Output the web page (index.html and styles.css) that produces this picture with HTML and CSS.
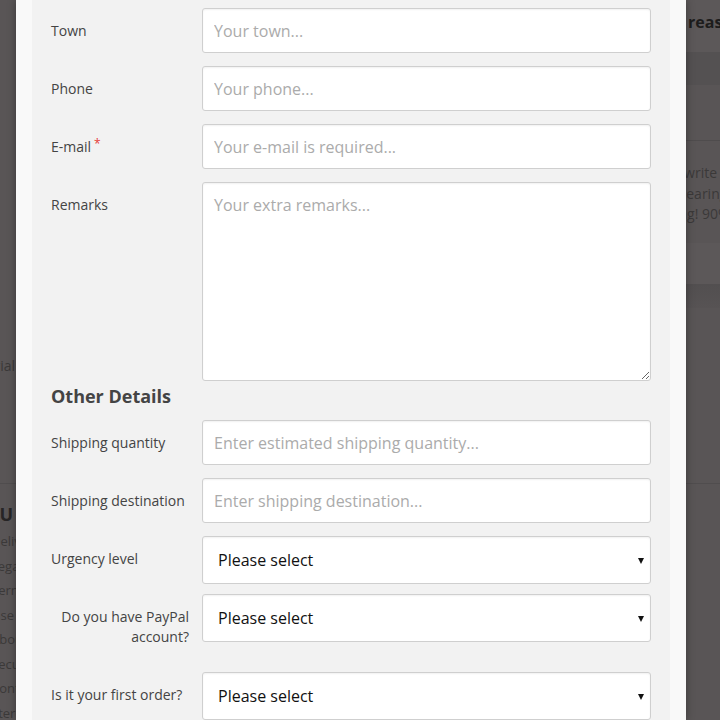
FILE: index.html
```html
<!DOCTYPE html>
<html lang="en">
<head>
  <meta charset="UTF-8">
  <meta name="viewport" content="width=device-width, initial-scale=1.0">
  <title>Order Form</title>
  <link rel="stylesheet" href="styles.css">
</head>
<body>
  <!-- Page behind the dialog -->
  <div class="page">
    <div class="page-top">
      <aside class="side-left">
        <p class="side-tag">Tutorial</p>
      </aside>
      <div class="page-main"></div>
      <aside class="side-right">
        <div class="side-head">reasons to order</div>
        <div class="side-band"></div>
        <div class="side-box"></div>
        <p class="side-text">
          <span>o write down</span>
          <span>clearing up</span>
          <span>ing! 90% off</span>
        </p>
        <div class="side-card"></div>
        <div class="side-shade"></div>
      </aside>
    </div>
    <div class="page-bottom">
      <div class="side-left">
        <h4 class="menu-title">MENU</h4>
        <ul class="menu-list">
          <li>Delivery</li>
          <li>Legal</li>
          <li>Terms</li>
          <li>Use</li>
          <li>About</li>
          <li>Security</li>
          <li>Contact</li>
          <li>Stern</li>
        </ul>
      </div>
    </div>
  </div>

  <!-- Order dialog -->
  <div class="modal">
    <div class="modal-body">
      <form class="order-form">
        <div class="row">
          <label for="town">Town</label>
          <input type="text" id="town" placeholder="Your town...">
        </div>
        <div class="row">
          <label for="phone">Phone</label>
          <input type="text" id="phone" placeholder="Your phone...">
        </div>
        <div class="row">
          <label for="email">E-mail<span class="req">*</span></label>
          <input type="email" id="email" placeholder="Your e-mail is required..." required>
        </div>
        <div class="row row-area">
          <label for="remarks">Remarks</label>
          <textarea id="remarks" placeholder="Your extra remarks..."></textarea>
        </div>

        <h3 class="form-title">Other Details</h3>

        <div class="row">
          <label for="qty">Shipping quantity</label>
          <input type="text" id="qty" placeholder="Enter estimated shipping quantity...">
        </div>
        <div class="row">
          <label for="dest">Shipping destination</label>
          <input type="text" id="dest" placeholder="Enter shipping destination...">
        </div>
        <div class="row row-select">
          <label for="urgency">Urgency level</label>
          <div class="select-wrap">
            <select id="urgency">
              <option>Please select</option>
              <option>Low</option>
              <option>High</option>
            </select>
          </div>
        </div>
        <div class="row row-select">
          <label for="paypal" class="label-right">Do you have PayPal account?</label>
          <div class="select-wrap">
            <select id="paypal">
              <option>Please select</option>
              <option>Yes</option>
              <option>No</option>
            </select>
          </div>
        </div>
        <div class="row row-select">
          <label for="first">Is it your first order?</label>
          <div class="select-wrap">
            <select id="first">
              <option>Please select</option>
              <option>Yes</option>
              <option>No</option>
            </select>
          </div>
        </div>
      </form>
    </div>
  </div>
</body>
</html>
```

FILE: styles.css
```css
html, body {
  margin: 0;
  padding: 0;
  height: 100%;
  overflow: hidden;
}
body {
  font-family: "Open Sans", Arial, sans-serif;
  background-color: #595556;
  color: #3b3939;
}

/* background page (dimmed) */
.page {
  width: 1000px;
  margin-left: -200px;
}
.page-top {
  display: flex;
  height: 483px;
  border-bottom: 1px solid #504d4e;
}
.page-bottom {
  display: flex;
}
.side-left {
  width: 216px;
  flex-shrink: 0;
}
.page-main {
  width: 662px;
  flex-shrink: 0;
}
.side-right {
  flex: 1;
}
.side-tag {
  margin: 356px 0 0;
  text-align: right;
  padding-right: 1px;
  font-size: 14px;
  line-height: 20px;
}
.side-head {
  height: 52px;
  line-height: 44px;
  padding-left: 10px;
  background-color: #5c5859;
  color: #1d1c1c;
  font-size: 16px;
  font-weight: bold;
  white-space: nowrap;
}
.side-band {
  height: 33px;
  background-color: #545152;
}
.side-box {
  height: 55px;
  border-bottom: 1px solid #4f4c4d;
}
.side-text {
  margin: 22px 0 0;
  font-size: 14px;
  line-height: 20.5px;
  white-space: nowrap;
}
.side-text span {
  display: block;
}
.side-text span:nth-child(1) { margin-left: -6px; }
.side-text span:nth-child(2) { margin-left: -2px; }
.side-text span:nth-child(3) { margin-left: -3px; }
.side-card {
  margin-top: 18px;
  height: 41px;
  background-color: #5c5859;
}
.side-shade {
  height: 24px;
  background: linear-gradient(#524f50, #575354);
}
.menu-title {
  margin: 19px 0 0;
  text-align: right;
  padding-right: 3px;
  font-size: 18px;
  line-height: 22px;
  color: #272526;
}
.menu-list {
  list-style: none;
  margin: 4px 0 0;
  padding: 0 0 0 191px;
  font-size: 13px;
  line-height: 24.5px;
  white-space: nowrap;
}

/* dialog */
.modal {
  position: fixed;
  top: 0;
  left: 16px;
  width: 670px;
  height: 720px;
  box-sizing: border-box;
  padding: 0 16px;
  background-color: #f9f9f9;
  box-shadow: 0 0 8px rgba(0, 0, 0, 0.35);
}
.modal-body {
  height: 100%;
  box-sizing: border-box;
  padding: 8px 19px 0;
  background-color: #f2f2f2;
}
.row {
  display: grid;
  grid-template-columns: 138px 449px;
  column-gap: 13px;
  align-items: start;
  margin-bottom: 13px;
}
.row-select {
  margin-bottom: 10px;
}
.row label {
  padding: 13px 0 11px;
  font-size: 14px;
  line-height: 20px;
  color: #444;
}
.row .label-right {
  text-align: right;
  padding-bottom: 15px;
}
.req {
  color: #e53935;
  font-size: 12px;
  vertical-align: top;
  position: relative;
  top: -3px;
  margin-left: 3px;
}
input, textarea, select {
  box-sizing: border-box;
  width: 100%;
  font-family: "Open Sans", Arial, sans-serif;
  font-size: 16px;
  border: 1px solid #cfcfcf;
  border-radius: 3px;
  background-color: #fff;
  box-shadow: inset 0 1px 2px rgba(0, 0, 0, 0.06);
  outline: none;
}
input {
  height: 45px;
  padding: 0 11px;
  color: #333;
}
textarea {
  display: block;
  height: 199px;
  padding: 11px 11px 10px;
  line-height: 22px;
  color: #333;
}
input::placeholder, textarea::placeholder {
  color: #ababab;
}
.form-title {
  margin: -10px 0 11px;
  font-size: 18px;
  line-height: 25px;
  font-weight: bold;
  color: #444;
}
.select-wrap {
  position: relative;
}
select {
  -webkit-appearance: none;
  appearance: none;
  height: 48px;
  padding: 0 15px;
  color: #111;
}
.select-wrap::after {
  content: "";
  position: absolute;
  right: 7px;
  top: 22px;
  border-left: 3.5px solid transparent;
  border-right: 3.5px solid transparent;
  border-top: 6px solid #111;
  pointer-events: none;
}
```
